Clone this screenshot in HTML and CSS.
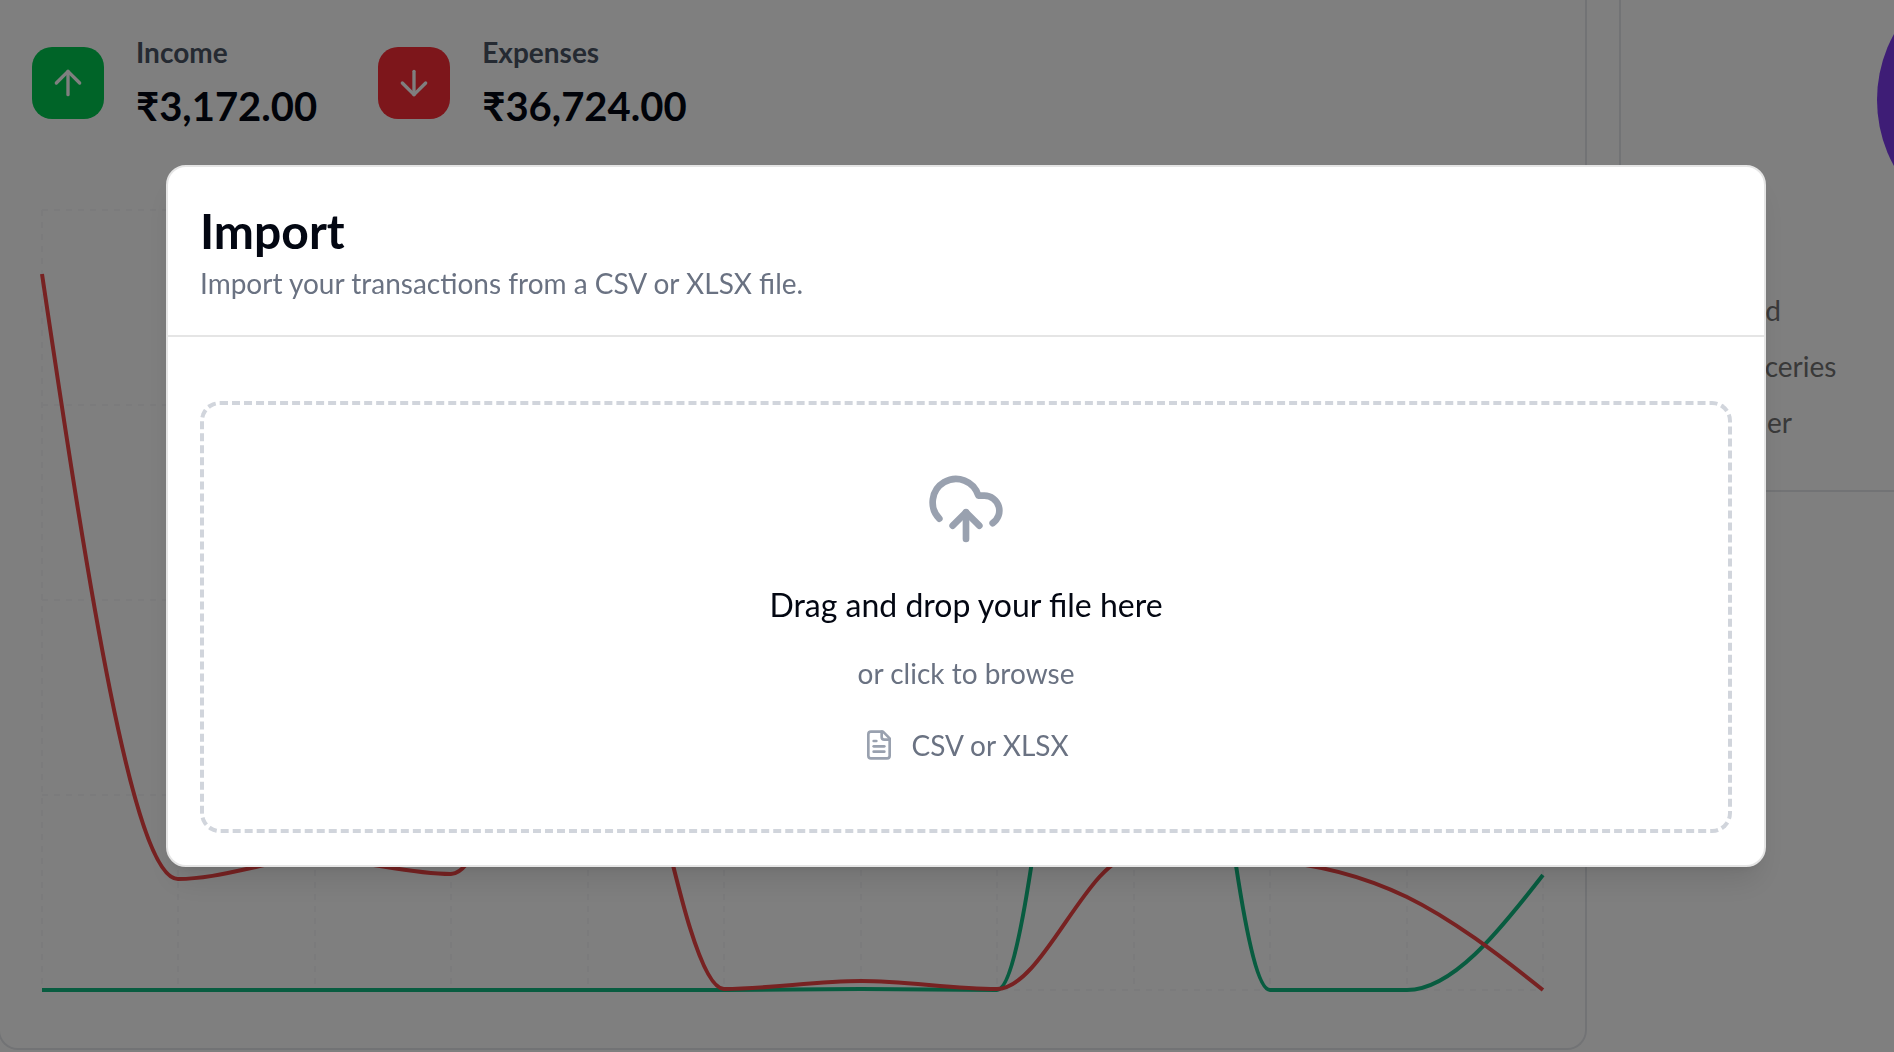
FILE: index.html
```html
<!DOCTYPE html>
<html lang="en">
<head>
<meta charset="utf-8">
<title>Import transactions</title>
<link rel="stylesheet" href="styles.css">
</head>
<body>
<main class="dashboard">
  <section class="card trend">
    <div class="stats">
      <div class="stat">
        <span class="tile tile-income">
          <svg class="tile-icon" viewBox="0 0 24 24" aria-hidden="true"><path d="m5 12 7-7 7 7"/><path d="M12 19V5"/></svg>
        </span>
        <div class="stat-text">
          <p class="stat-label">Income</p>
          <p class="stat-value">₹3,172.00</p>
        </div>
      </div>
      <div class="stat">
        <span class="tile tile-expenses">
          <svg class="tile-icon" viewBox="0 0 24 24" aria-hidden="true"><path d="M12 5v14"/><path d="m19 12-7 7-7-7"/></svg>
        </span>
        <div class="stat-text">
          <p class="stat-label">Expenses</p>
          <p class="stat-value">₹36,724.00</p>
        </div>
      </div>
    </div>
    <svg class="chart" viewBox="0 0 1521 800" role="img" aria-label="Income and expenses over time">
      <g class="grid-lines">
        <path d="M10 10H1511M10 205H1511M10 400H1511M10 595H1511M10 790H1511"/>
        <path d="M10 10V790M146 10V790M283 10V790M419 10V790M556 10V790M692 10V790M829 10V790M965 10V790M1102 10V790M1238 10V790M1375 10V790M1511 10V790"/>
      </g>
      <path class="line line-income" d="M10 790H692C738 790 783 789 829 789C874 789 920 790 965 790C1011 790 1056 -5 1102 -5C1147 -5 1193 790 1238 790H1375C1420 790 1466 733 1511 675"/>
      <path class="line line-expenses" d="M10 74C55 377 101 679 146 679C192 679 237 659 283 659C328 659 374 674 419 674C465 674 510 400 556 400C601 400 647 789 692 789C738 789 783 781 829 781C874 781 920 789 965 789C1011 789 1056 656 1102 656C1147 656 1193 658 1238 661C1284 664 1329 675 1375 697C1420 719 1466 754 1511 790"/>
    </svg>
  </section>
  <section class="card categories">
    <svg class="pie" viewBox="0 0 274 274" role="img" aria-label="Spending by category"><circle cx="137" cy="137" r="137"/></svg>
    <ul class="legend">
      <li>Food</li>
      <li>Groceries</li>
      <li>Other</li>
    </ul>
  </section>
</main>
<div class="overlay">
  <div class="dialog" role="dialog" aria-modal="true" aria-labelledby="dialog-title">
    <header class="dialog-header">
      <h1 class="dialog-title" id="dialog-title">Import</h1>
      <p class="dialog-subtitle">Import your transactions from a CSV or XLSX file.</p>
    </header>
    <div class="dialog-body">
      <button class="dropzone" type="button">
        <svg class="cloud" viewBox="0 0 24 24" aria-hidden="true"><path d="M12 13v8"/><path d="M4 14.899A7 7 0 1 1 15.71 8h1.79a4.5 4.5 0 0 1 2.5 8.242"/><path d="m8 17 4-4 4 4"/></svg>
        <span class="drop-title">Drag and drop your file here</span>
        <span class="drop-hint">or click to browse</span>
        <span class="formats">
          <svg class="file" viewBox="0 0 24 24" aria-hidden="true"><path d="M15 2H6a2 2 0 0 0-2 2v16a2 2 0 0 0 2 2h12a2 2 0 0 0 2-2V7Z"/><path d="M14 2v4a2 2 0 0 0 2 2h4"/><path d="M10 9H8"/><path d="M16 13H8"/><path d="M16 17H8"/></svg>
          CSV or XLSX
        </span>
      </button>
    </div>
  </div>
</div>
</body>
</html>
```
FILE: styles.css
```css
* {
  box-sizing: border-box;
  margin: 0;
  padding: 0;
}

body {
  min-height: 100vh;
  overflow: hidden;
  background: #fff;
  color: #030712;
  font: 28px/40px Lato, "Noto Sans", sans-serif;
}

svg {
  display: block;
  fill: none;
  stroke: currentColor;
  stroke-width: 2;
  stroke-linecap: round;
  stroke-linejoin: round;
}

/* The second column is wider than the room left for it and is cut off. */
.dashboard {
  display: grid;
  grid-template-columns: calc(84vw - 2px) calc(42vw - 6px);
  gap: 32px;
  align-items: start;
  margin-left: -2px;
  overflow: hidden;
}

.card {
  border: 2px solid #e5e7eb;
  border-top: 0;
  border-radius: 0 0 20px 20px;
}

.trend {
  padding: 32px 32px 48px;
}

.stats {
  display: flex;
  gap: 61px;
}

.stat {
  display: flex;
  align-items: flex-start;
  gap: 32px;
}

.tile {
  display: grid;
  place-items: center;
  width: 72px;
  height: 72px;
  margin-top: 15px;
  border-radius: 20px;
  color: #fff;
}

.tile-income {
  background: #00c950;
}

.tile-expenses {
  background: #fb2c36;
}

.tile-icon {
  width: 40px;
  height: 40px;
}

.stat-label {
  color: #4a5565;
  font-weight: 700;
}

.stat-value {
  font-size: 40px;
  font-weight: 700;
  line-height: 68px;
}

.chart {
  width: 100%;
  margin-top: 60px;
}

.grid-lines {
  stroke: #f6f7f8;
  stroke-dasharray: 6 6;
  stroke-linecap: butt;
}

.line {
  stroke-width: 4;
  stroke-linecap: butt;
}

.line-income {
  stroke: #10b981;
}

.line-expenses {
  stroke: #ef4444;
}

.categories {
  padding: 0 32px 48px;
}

.pie {
  width: 274px;
  margin: -37px auto 0;
  fill: #7c3aed;
  stroke: none;
}

.legend {
  display: grid;
  gap: 16px;
  margin-top: 53px;
  padding-left: 66px;
  color: #737373;
  list-style: none;
}

.overlay {
  position: fixed;
  inset: 0;
  display: flex;
  align-items: flex-start;
  justify-content: center;
  padding: 165px 128px 0 166px;
  background: rgb(0 0 0 / 50%);
}

.dialog {
  flex: 1;
  border: 2px solid #e5e5e5;
  border-radius: 20px;
  background: #fff;
  box-shadow: 0 20px 30px -6px rgb(0 0 0 / 10%), 0 8px 12px -8px rgb(0 0 0 / 10%);
}

.dialog-header {
  padding: 32px;
  border-bottom: 2px solid #e5e5e5;
}

.dialog-title {
  font-size: 48px;
  font-weight: 700;
  line-height: 64px;
}

.dialog-subtitle {
  color: #6a7282;
}

.dialog-body {
  padding: 64px 32px 32px;
}

.dropzone {
  display: flex;
  flex-direction: column;
  align-items: center;
  width: 100%;
  padding: 64px;
  border: 4px dashed #d1d5dc;
  border-radius: 20px;
  background: none;
  color: #6a7282;
  font: inherit;
  cursor: pointer;
}

.cloud {
  width: 80px;
  height: 80px;
  color: #99a1af;
}

.drop-title {
  margin-top: 32px;
  color: #030712;
  font-size: 32px;
  line-height: 48px;
}

.drop-hint {
  margin-top: 24px;
}

.formats {
  display: flex;
  align-items: center;
  gap: 16px;
  margin-top: 32px;
}

.file {
  width: 32px;
  height: 32px;
  color: #99a1af;
}
```
